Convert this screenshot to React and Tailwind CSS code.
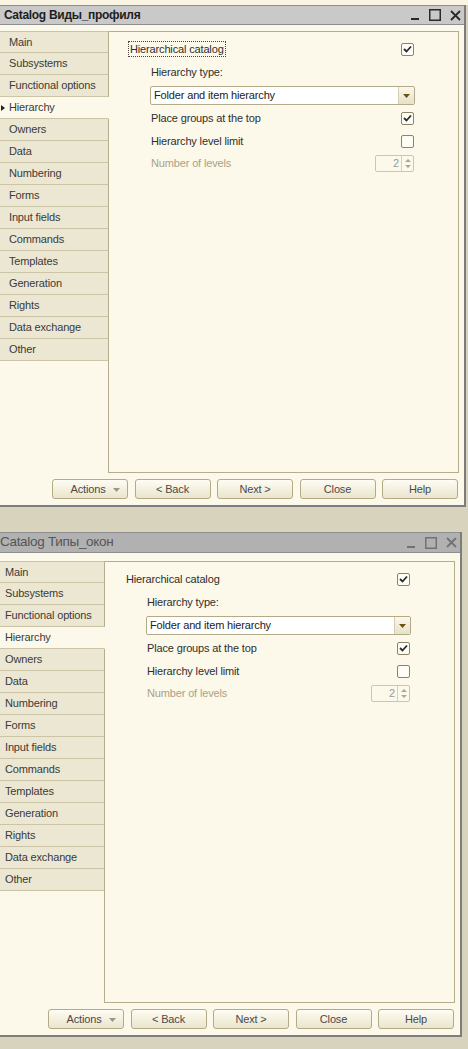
import React from "react";

const TABS = [
  "Main",
  "Subsystems",
  "Functional options",
  "Hierarchy",
  "Owners",
  "Data",
  "Numbering",
  "Forms",
  "Input fields",
  "Commands",
  "Templates",
  "Generation",
  "Rights",
  "Data exchange",
  "Other",
];

function Check({ checked }) {
  return (
    <div className="w-[13px] h-[13px] rounded-[2px] border border-[#8a8468] bg-[#fdfcf5] flex items-center justify-center">
      {checked && (
        <svg width="9" height="8" viewBox="0 0 9 8">
          <path d="M1 4 L3.5 6.5 L8 1.5" fill="none" stroke="#2b2b2b" strokeWidth="1.8" />
        </svg>
      )}
    </div>
  );
}

function TitleControls({ color }) {
  return (
    <div className="flex items-center gap-[9px] ml-auto mr-[1px]">
      <svg width="9" height="12" viewBox="0 0 9 12">
        <rect x="0" y="9" width="8" height="2" fill={color} />
      </svg>
      <svg width="12" height="12" viewBox="0 0 12 12">
        <rect x="0.75" y="0.75" width="10.5" height="10.5" fill="none" stroke={color} strokeWidth="1.5" />
      </svg>
      <svg width="11" height="11" viewBox="0 0 11 11">
        <path d="M1 1 L10 10 M10 1 L1 10" stroke={color} strokeWidth="1.8" />
      </svg>
    </div>
  );
}

function Btn({ children, actions }) {
  return (
    <div className="relative w-[76px] h-[20px] rounded-[3px] border border-[#b3ab87] bg-linear-to-b from-[#fefcf4] to-[#ebe5cc] flex items-center justify-center text-[#4a4a4a]">
      <span>{children}</span>
      {actions && (
        <svg className="absolute right-[7px] top-[8px]" width="7" height="4" viewBox="0 0 7 4">
          <path d="M0 0 H7 L3.5 4 Z" fill="#9a968a" />
        </svg>
      )}
    </div>
  );
}

function Window({ title, active, shifted }) {
  const ctl = active ? "#2a2a2a" : "#727272";
  return (
    <div
      className={`w-[466px] border-r-2 border-b-2 border-[#7d7d7d] bg-[#fcf9ea] ${
        shifted ? "-ml-[4px]" : ""
      }`}
    >
      <div
        className={`flex items-center pl-[4px] pr-[2px] border-y border-[#8e8e8e] ${
          active
            ? "h-[20px] bg-[#c9c9c9] text-[#1e1e1e] font-bold text-[12px] tracking-[-0.3px]"
            : "h-[21px] bg-[#b1b1b1] text-[#555555] text-[13.5px] tracking-[-0.3px]"
        }`}
      >
        <span>{title}</span>
        <TitleControls color={ctl} />
      </div>
      <div className={`${active ? "pt-[6px]" : "pt-[8px]"} pr-[5px] pb-[6px]`}>
        <div className="flex h-[442px]">
          <div className="w-[109px] flex flex-col">
            {TABS.map((t, i) => {
              const sel = t === "Hierarchy";
              return (
                <div
                  key={t}
                  className={`h-[22px] shrink-0 flex items-center border-b border-[#cbc4a6] ${
                    i === 0 ? "border-t" : ""
                  } ${sel ? "bg-[#fcf9ea] border-r border-r-transparent" : "bg-[#ece7d2] border-r border-r-[#b5ad8c]"} text-[#3a3a3a]`}
                >
                  <span className="w-[9px] pl-[1px] flex items-center">
                    {sel && active && (
                      <svg width="4" height="6" viewBox="0 0 4 6">
                        <path d="M0 0 L4 3 L0 6 Z" fill="#222" />
                      </svg>
                    )}
                  </span>
                  <span>{t}</span>
                </div>
              );
            })}
            <div className="flex-1 border-r border-[#b5ad8c]" />
          </div>
          <div className="flex-1 border-t border-r border-b border-[#b5ad8c] text-[#2e2e2e]">
            <div className="mt-[8px] h-[18px] flex items-center pl-[19px] pr-[44px]">
              <span
                className={`border border-dotted ${
                  active ? "border-[#444]" : "border-transparent"
                } px-[1px] leading-[14px]`}
              >
                Hierarchical catalog
              </span>
              <div className="ml-auto">
                <Check checked />
              </div>
            </div>
            <div className="mt-[6px] h-[16px] flex items-center pl-[42px]">Hierarchy type:</div>
            <div className="mt-[6px] ml-[41px] mr-[43px] h-[19px] rounded-[2px] border border-[#b3ab88] bg-white flex">
              <span className="flex-1 flex items-center pl-[3px] text-[#222]">Folder and item hierarchy</span>
              <div className="w-[16px] border-l border-[#d4cdb0] bg-linear-to-b from-[#fbf8ec] to-[#e7e1c8] flex items-center justify-center rounded-r-[2px]">
                <svg width="7" height="4" viewBox="0 0 7 4">
                  <path d="M0 0 H7 L3.5 4 Z" fill="#6e4f0c" />
                </svg>
              </div>
            </div>
            <div className="mt-[4px] h-[18px] flex items-center pl-[42px] pr-[44px]">
              <span>Place groups at the top</span>
              <div className="ml-auto">
                <Check checked />
              </div>
            </div>
            <div className="mt-[5px] h-[18px] flex items-center pl-[42px] pr-[44px]">
              <span>Hierarchy level limit</span>
              <div className="ml-auto">
                <Check />
              </div>
            </div>
            <div className="mt-[4px] h-[18px] flex items-center pl-[42px] pr-[44px]">
              <span className="text-[#a9a189]">Number of levels</span>
              <div className="ml-auto w-[39px] h-[17px] rounded-[2px] border border-[#cdc6a8] flex">
                <span className="flex-1 flex items-center justify-end pr-[2px] text-[#9a9a9a]">2</span>
                <div className="w-[12px] border-l border-[#d6d0b6] flex flex-col items-center justify-center gap-[3px]">
                  <svg width="6" height="3" viewBox="0 0 6 3">
                    <path d="M0 3 H6 L3 0 Z" fill="#a6a6a6" />
                  </svg>
                  <svg width="6" height="3" viewBox="0 0 6 3">
                    <path d="M0 0 H6 L3 3 Z" fill="#a6a6a6" />
                  </svg>
                </div>
              </div>
            </div>
          </div>
        </div>
        <div className="mt-[6px] flex justify-end gap-[6.5px] pr-[1px]">
          <Btn actions>
            <span className="-ml-[4px]">Actions</span>
          </Btn>
          <Btn>&lt; Back</Btn>
          <Btn>Next &gt;</Btn>
          <Btn>Close</Btn>
          <Btn>Help</Btn>
        </div>
      </div>
    </div>
  );
}

export default function App() {
  return (
    <div className="w-[468px] h-[1049px] overflow-hidden bg-[#d8d3bd] font-['Liberation_Sans',Arial,sans-serif] text-[11px] tracking-[-0.15px]">
      <div className="h-[5px] bg-[#f9f5e2]" />
      <Window title="Catalog Виды_профиля" active />
      <div className="h-[25px]" />
      <Window title="Catalog Типы_окон" shifted />
    </div>
  );
}
